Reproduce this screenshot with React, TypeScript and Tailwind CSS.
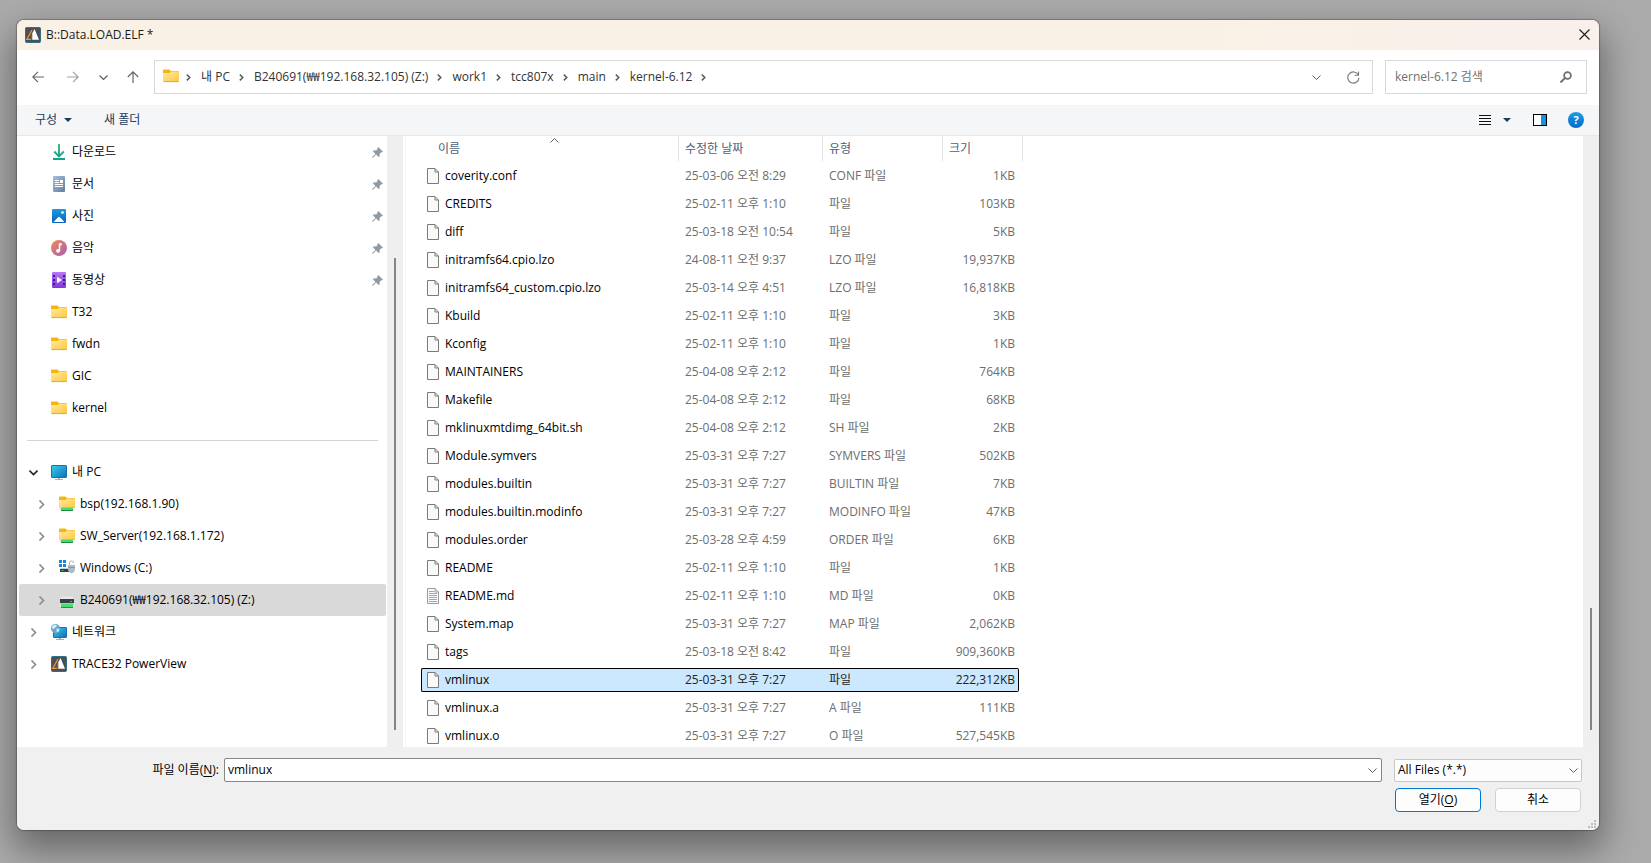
import React, { useState } from 'react';

type IconProps = { className?: string };

interface FileEntry {
  name: string;
  date: string;
  type: string;
  size: string;
  text?: boolean;
}

interface SideItem {
  label: string;
  icon: React.FC<IconProps>;
  pinned?: boolean;
  level?: number;
  expand?: 'open' | 'closed';
}

const files: FileEntry[] = [
  { name: 'coverity.conf', date: '25-03-06 오전 8:29', type: 'CONF 파일', size: '1KB' },
  { name: 'CREDITS', date: '25-02-11 오후 1:10', type: '파일', size: '103KB' },
  { name: 'diff', date: '25-03-18 오전 10:54', type: '파일', size: '5KB' },
  { name: 'initramfs64.cpio.lzo', date: '24-08-11 오전 9:37', type: 'LZO 파일', size: '19,937KB' },
  { name: 'initramfs64_custom.cpio.lzo', date: '25-03-14 오후 4:51', type: 'LZO 파일', size: '16,818KB' },
  { name: 'Kbuild', date: '25-02-11 오후 1:10', type: '파일', size: '3KB' },
  { name: 'Kconfig', date: '25-02-11 오후 1:10', type: '파일', size: '1KB' },
  { name: 'MAINTAINERS', date: '25-04-08 오후 2:12', type: '파일', size: '764KB' },
  { name: 'Makefile', date: '25-04-08 오후 2:12', type: '파일', size: '68KB' },
  { name: 'mklinuxmtdimg_64bit.sh', date: '25-04-08 오후 2:12', type: 'SH 파일', size: '2KB' },
  { name: 'Module.symvers', date: '25-03-31 오후 7:27', type: 'SYMVERS 파일', size: '502KB' },
  { name: 'modules.builtin', date: '25-03-31 오후 7:27', type: 'BUILTIN 파일', size: '7KB' },
  { name: 'modules.builtin.modinfo', date: '25-03-31 오후 7:27', type: 'MODINFO 파일', size: '47KB' },
  { name: 'modules.order', date: '25-03-28 오후 4:59', type: 'ORDER 파일', size: '6KB' },
  { name: 'README', date: '25-02-11 오후 1:10', type: '파일', size: '1KB' },
  { name: 'README.md', date: '25-02-11 오후 1:10', type: 'MD 파일', size: '0KB', text: true },
  { name: 'System.map', date: '25-03-31 오후 7:27', type: 'MAP 파일', size: '2,062KB' },
  { name: 'tags', date: '25-03-18 오전 8:42', type: '파일', size: '909,360KB' },
  { name: 'vmlinux', date: '25-03-31 오후 7:27', type: '파일', size: '222,312KB' },
  { name: 'vmlinux.a', date: '25-03-31 오후 7:27', type: 'A 파일', size: '111KB' },
  { name: 'vmlinux.o', date: '25-03-31 오후 7:27', type: 'O 파일', size: '527,545KB' },
];

const crumbs = ['내 PC', 'B240691(₩₩192.168.32.105) (Z:)', 'work1', 'tcc807x', 'main', 'kernel-6.12'];

/* ---------- icons ---------- */

const TraceIcon: React.FC<IconProps> = ({ className }) => (
  <svg className={className} width="16" height="16" viewBox="0 0 16 16">
    <rect x="0.5" y="0.5" width="15" height="15" rx="1" fill="#4d4f52" stroke="#2f7181" />
    <path d="M7 3 1.8 12.4h4" fill="none" stroke="#f09a35" strokeWidth="1.2" />
    <path d="M9.5 2 14 12.8H7.2V6.5z" fill="#fff" />
    <path d="M7.2 7.5v5" stroke="#bdbdbd" strokeWidth="0.8" />
  </svg>
);

const FolderIcon: React.FC<IconProps> = ({ className }) => (
  <svg className={className} width="16" height="16" viewBox="0 0 16 16">
    <defs>
      <linearGradient id="folder" x1="0" y1="0" x2="1" y2="1">
        <stop offset="0" stopColor="#ffe9a2" />
        <stop offset="1" stopColor="#ffc83d" />
      </linearGradient>
    </defs>
    <path d="M0 2.5A1 1 0 0 1 1 1.5h5.5L8 3h7a1 1 0 0 1 1 1v2H0z" fill="#f5b50f" />
    <path d="M0 5h6.5L8 3.6h7.2a.8.8 0 0 1 .8.8V13a1 1 0 0 1-1 1H1a1 1 0 0 1-1-1z" fill="url(#folder)" />
    <path d="M.6 13.6h14.8" stroke="#e8a21c" strokeWidth="0.9" />
  </svg>
);

const NetFolderIcon: React.FC<IconProps> = ({ className }) => (
  <svg className={className} width="16" height="16" viewBox="0 0 16 16">
    <path d="M0 1.5A1 1 0 0 1 1 .5h5.5L8 2h7a1 1 0 0 1 1 1v2H0z" fill="#f5b50f" />
    <path d="M0 4h6.5L8 2.6h7.2a.8.8 0 0 1 .8.8V12H0z" fill="url(#folder)" />
    <path d="M.5 12.5h15v1.5H.5z" fill="#e0e0e0" />
    <path d="M2 11.5h12V15H2z" fill="#3fdc68" />
    <path d="M2 14h12v1H2z" fill="#1e8b43" />
  </svg>
);

const DownloadIcon: React.FC<IconProps> = ({ className }) => (
  <svg className={className} width="16" height="16" viewBox="0 0 16 16" fill="none">
    <defs>
      <linearGradient id="down" x1="0" y1="0" x2="0" y2="16" gradientUnits="userSpaceOnUse">
        <stop offset="0" stopColor="#2fc06f" />
        <stop offset="1" stopColor="#109c9a" />
      </linearGradient>
    </defs>
    <path d="M8 0v12.2M3.2 7.5 8 12.3l4.8-4.8" stroke="url(#down)" strokeWidth="1.9" />
    <path d="M2 15h12" stroke="#14a08f" strokeWidth="1.8" />
  </svg>
);

const DocumentIcon: React.FC<IconProps> = ({ className }) => (
  <svg className={className} width="16" height="16" viewBox="0 0 16 16">
    <defs>
      <linearGradient id="doc" x1="0" y1="0" x2="1" y2="1">
        <stop offset="0" stopColor="#a9c0d8" />
        <stop offset="1" stopColor="#5f7fa0" />
      </linearGradient>
    </defs>
    <rect x="2" width="12" height="16" rx="1" fill="url(#doc)" />
    <path d="M4 4.5h4M4 6.5h4M4 8.5h8M4 10.5h8" stroke="#fff" />
    <path d="M9 4h3v3H9z" fill="#fff" />
  </svg>
);

const PictureIcon: React.FC<IconProps> = ({ className }) => (
  <svg className={className} width="16" height="16" viewBox="0 0 16 16">
    <defs>
      <linearGradient id="pic" x1="0" y1="0" x2="0" y2="1">
        <stop offset="0" stopColor="#1a9be2" />
        <stop offset="1" stopColor="#0a63bd" />
      </linearGradient>
    </defs>
    <rect x="1" y="1" width="14" height="14" rx="1" fill="url(#pic)" />
    <path d="m2.5 14 4.6-4.8a1.2 1.2 0 0 1 1.8 0L13.5 14z" fill="#fff" />
    <circle cx="11.5" cy="4.5" r="1.3" fill="#fff" />
  </svg>
);

const MusicIcon: React.FC<IconProps> = ({ className }) => (
  <svg className={className} width="16" height="16" viewBox="0 0 16 16">
    <defs>
      <linearGradient id="music" x1="0" y1="0" x2="1" y2="1">
        <stop offset="0" stopColor="#f28a52" />
        <stop offset="1" stopColor="#a45fb8" />
      </linearGradient>
    </defs>
    <circle cx="8" cy="8" r="8" fill="url(#music)" />
    <circle cx="7" cy="10.8" r="1.9" fill="#fff" />
    <path d="M7.8 11V3.2h3v2H9.2V11z" fill="#fff" />
  </svg>
);

const VideoIcon: React.FC<IconProps> = ({ className }) => (
  <svg className={className} width="16" height="16" viewBox="0 0 16 16">
    <defs>
      <linearGradient id="video" x1="0" y1="0" x2="0" y2="1">
        <stop offset="0" stopColor="#b777f5" />
        <stop offset="1" stopColor="#8237dc" />
      </linearGradient>
    </defs>
    <rect x="1" width="14" height="16" rx="1" fill="url(#video)" />
    <path d="M2 3h2v2H2zM2 7h2v2H2zM2 11h2v2H2zM12 3h2v2h-2zM12 7h2v2h-2zM12 11h2v2h-2z" fill="#3d1c7c" />
    <path d="m6 4.8 5 3.2-5 3.2z" fill="#fff" />
  </svg>
);

const PcIcon: React.FC<IconProps> = ({ className }) => (
  <svg className={className} width="16" height="16" viewBox="0 0 16 16">
    <defs>
      <linearGradient id="pc" x1="0" y1="0" x2="1" y2="1">
        <stop offset="0" stopColor="#36d3e6" />
        <stop offset="1" stopColor="#0f6cc0" />
      </linearGradient>
    </defs>
    <rect x="0.5" y="1.5" width="15" height="12" rx="0.6" fill="url(#pc)" stroke="#1d6f9c" />
    <path d="M7 14h2v1H7z" fill="#a9b3bb" />
    <path d="M4 15h8v1H4z" fill="#aab4bc" />
  </svg>
);

const NetworkIcon: React.FC<IconProps> = ({ className }) => (
  <svg className={className} width="16" height="16" viewBox="0 0 16 16">
    <rect x="2.5" y="3.5" width="13" height="10" rx="0.6" fill="url(#pc)" stroke="#1d6f9c" />
    <path d="M5 15h8v1H5zM8 14h2v1H8z" fill="#a4aeb6" />
    <circle cx="4.5" cy="4.5" r="4.5" fill="#6ea9cc" />
    <path d="M1 2.8C2.6.6 5 .4 5.8 1.4 5.6 3.4 3.4 3 3 5 1.8 5 1 4.2 1 2.8zM5.5 5c1.500-.6 2.600-.2 3 .4-.4 1.600-1.400 2.600-2.600 3z" fill="#d8edf6" />
  </svg>
);

const WindowsDriveIcon: React.FC<IconProps> = ({ className }) => (
  <svg className={className} width="16" height="16" viewBox="0 0 16 16">
    <path d="M0 0h3v3H0zM4 0h3v3H4zM0 4h3v3H0zM4 4h3v3H4z" fill="#1089de" />
    <path d="M2 8h10l1 1H1z" fill="#c9cdd1" />
    <path d="M1 9h11v3H1z" fill="#3a3d40" />
    <path d="M2.5 10.5h2" stroke="#39d353" />
    <path d="M10.5 5V3a2 2 0 0 1 4 0" stroke="#b4bcc4" strokeWidth="1.2" fill="none" />
    <path d="M9 5h7v4.5c0 2-1.500 3.200-3.500 4-2-.8-3.500-2-3.500-4z" fill="#a9bccd" />
    <path d="M9 7.5h7" stroke="#6d9fcb" />
  </svg>
);

const NetDriveIcon: React.FC<IconProps> = ({ className }) => (
  <svg className={className} width="16" height="16" viewBox="0 0 16 16">
    <path d="M3 4.5h10L15 7H1z" fill="#e6e8ea" />
    <path d="M1 7h14v4H1z" fill="#3b3f43" />
    <path d="M11.5 9.5H13" stroke="#45e06b" />
    <path d="M0 13h16v1H0z" fill="#e9e9e9" />
    <path d="M2 11.5h12V15H2z" fill="#46df6d" />
    <path d="M2 15h12v1H2z" fill="#1f9447" />
  </svg>
);

const FileIcon = ({ lined }: { lined?: boolean }) => (
  <svg width="12" height="16" viewBox="0 0 12 16" className="shrink-0">
    <path d="M.5.5H8L11.5 4v11.5H.5z" fill="#fafafa" stroke={lined ? '#9b9b9b' : '#7a7a78'} />
    <path d="M8 .5V4h3.5" fill="none" stroke={lined ? '#9b9b9b' : '#7a7a78'} />
    {lined && <path d="M2 3.5h5M2 5.5h8M2 7.5h8M2 9.5h8M2 11.5h8M2 13.5h8" stroke="#a5a5a5" />}
  </svg>
);

const PinIcon = () => (
  <svg width="11" height="11" viewBox="0 0 11 11" fill="#8f9aa3">
    <path d="M6.3 0 11 4.7l-1 .9-.8-.3-1.6 1.6.1 2.3-1 .9-2.6-2.5L.8 11l-.8-.8 3.4-3.3L.9 4.3l.9-1 2.3.1 1.6-1.6L5.4 1z" />
  </svg>
);

const Chevron = ({ dir, size = 9, stroke = '#5c5c5c', width = 1 }: { dir: 'down' | 'right' | 'up'; size?: number; stroke?: string; width?: number }) => {
  const d = { down: 'M.5 2.5l4 4 4-4', right: 'M2.5.5l4 4-4 4', up: 'M.5 6.5l4-4 4 4' }[dir];
  return (
    <svg width={size} height={size} viewBox="0 0 9 9" fill="none" stroke={stroke} strokeWidth={width}>
      <path d={d} />
    </svg>
  );
};

// heavier and shorter than Chevron, between the parts of the path
const CrumbArrow = () => (
  <svg width="5" height="7" viewBox="0 0 5 7" fill="none" stroke="#5c5c5c" strokeWidth="1.5">
    <path d="m.8.6 3 2.9-3 2.9" />
  </svg>
);

const Triangle = () => (
  <svg width="8" height="4" viewBox="0 0 8 4" fill="#1e395b">
    <path d="M0 0h8L4 4z" />
  </svg>
);

const sideItems: (SideItem | null)[] = [
  { label: '다운로드', icon: DownloadIcon, pinned: true },
  { label: '문서', icon: DocumentIcon, pinned: true },
  { label: '사진', icon: PictureIcon, pinned: true },
  { label: '음악', icon: MusicIcon, pinned: true },
  { label: '동영상', icon: VideoIcon, pinned: true },
  { label: 'T32', icon: FolderIcon },
  { label: 'fwdn', icon: FolderIcon },
  { label: 'GIC', icon: FolderIcon },
  { label: 'kernel', icon: FolderIcon },
  null, // divider
  { label: '내 PC', icon: PcIcon, expand: 'open' },
  { label: 'bsp(192.168.1.90)', icon: NetFolderIcon, level: 1, expand: 'closed' },
  { label: 'SW_Server(192.168.1.172)', icon: NetFolderIcon, level: 1, expand: 'closed' },
  { label: 'Windows (C:)', icon: WindowsDriveIcon, level: 1, expand: 'closed' },
  { label: 'B240691(₩₩192.168.32.105) (Z:)', icon: NetDriveIcon, level: 1, expand: 'closed' },
  { label: '네트워크', icon: NetworkIcon, expand: 'closed' },
  { label: 'TRACE32 PowerView', icon: TraceIcon, expand: 'closed' },
];

/* ---------- sections ---------- */

const TitleBar = () => (
  <header className="flex h-[30px] shrink-0 items-center bg-linear-to-r from-[#faf1e6] from-75% to-[#f9efec] pb-[1px] pl-2 pr-[9px]">
    <TraceIcon />
    <h1 className="ml-[5px] flex-1 text-[#1a1a1a]">B::Data.LOAD.ELF *</h1>
    <button aria-label="닫기">
      <svg width="11" height="11" viewBox="0 0 11 11" stroke="#1a1a1a" strokeWidth="1.1">
        <path d="m.5.5 10 10m0-10-10 10" />
      </svg>
    </button>
  </header>
);

const NavBar = () => (
  <div className="flex h-[55px] shrink-0 items-center gap-3 bg-white pb-[1px] pl-[15px] pr-3">
    <nav className="flex w-[110px] items-center">
      <button aria-label="뒤로">
        <svg width="12" height="12" viewBox="0 0 12 12" fill="none" stroke="#666" strokeWidth="1.2">
          <path d="M12 6H.8M6 .8.8 6 6 11.2" />
        </svg>
      </button>
      <button aria-label="앞으로" className="ml-[23px]">
        <svg width="12" height="12" viewBox="0 0 12 12" fill="none" stroke="#a0a0a0" strokeWidth="1.2">
          <path d="M0 6h11.2M6 .8 11.2 6 6 11.2" />
        </svg>
      </button>
      <button aria-label="최근 위치" className="ml-5">
        <Chevron dir="down" width={1.2} />
      </button>
      <button aria-label="위로" className="ml-[19px]">
        <svg width="12" height="12" viewBox="0 0 12 12" fill="none" stroke="#666" strokeWidth="1.2">
          <path d="M6 12V.8M.8 6 6 .8 11.2 6" />
        </svg>
      </button>
    </nav>
    <div className="flex h-[34px] flex-1 items-center border border-[#d9d9d9] pl-2 pr-3 text-[#333]">
      <FolderIcon className="mb-[2px]" />
      <ol className="flex flex-1 items-center gap-[9px] pl-[7px]">
        {crumbs.map((crumb) => (
          <li key={crumb} className="flex items-center gap-[10px]">
            <CrumbArrow />
            <button>{crumb}</button>
          </li>
        ))}
        <li className="flex">
          <CrumbArrow />
        </li>
      </ol>
      <button aria-label="이전 위치">
        <Chevron dir="down" />
      </button>
      <button aria-label="새로 고침" className="ml-[26px]">
        <svg width="13" height="13" viewBox="0 0 13 13" fill="none" stroke="#777" strokeWidth="1.1">
          <path d="M11.3 3.8A5.6 5.6 0 1 0 12 6.8" />
          <path d="M11.5.5v3.7H7.8" />
        </svg>
      </button>
    </div>
    <label className="flex h-[34px] w-[202px] items-center border border-[#d9d9d9] pl-[9px] pr-[14px]">
      <input
        type="text"
        aria-label="검색"
        placeholder="kernel-6.12 검색"
        className="min-w-0 flex-1 outline-none placeholder:text-[#707070]"
      />
      <svg width="12" height="12" viewBox="0 0 12 12" fill="none" stroke="#707070">
        <circle cx="7.5" cy="4.5" r="3.4" strokeWidth="1.8" />
        <path d="M4.9 7.1.5 11.5" strokeWidth="2" />
      </svg>
    </label>
  </div>
);

const Toolbar = () => (
  <div className="flex h-[31px] shrink-0 items-center border-b border-[#e5e7ea] bg-[#f4f6f8] pl-[18px] pr-[15px] text-[#1e395b]">
    <button className="flex items-center gap-[7px]">
      구성 <Triangle />
    </button>
    <button className="ml-8">새 폴더</button>
    <div className="ml-auto flex items-center">
      <button aria-label="보기 변경" className="flex items-center gap-3">
        <svg width="12" height="10" viewBox="0 0 12 10" stroke="#111" shapeRendering="crispEdges">
          <path d="M0 .5h12M0 3.5h12M0 6.5h12M0 9.5h12" />
        </svg>
        <Triangle />
      </button>
      <button aria-label="미리 보기 창" className="ml-[22px]">
        <svg width="14" height="12" viewBox="0 0 14 12">
          <rect x="0.5" y="0.5" width="13" height="11" fill="#fff" stroke="#000" />
          <path d="M8 1h5v10H8z" fill="#1592e0" />
        </svg>
      </button>
      <button
        aria-label="도움말"
        className="ml-[21px] flex size-4 items-center justify-center rounded-full bg-linear-to-b from-[#1c9fe5] to-[#0668c8] text-[11px] font-bold text-white"
      >
        ?
      </button>
    </div>
  </div>
);

const Sidebar = () => (
  <div className="flex w-[388px] shrink-0">
    <ul className="min-w-0 flex-1 bg-white pl-[2px] pr-[1px]">
      {sideItems.map((item) => {
        if (!item) {
          return (
            <li key="divider" className="flex h-8 items-center pl-2 pr-2">
              <hr className="flex-1 border-[#d4d4d4]" />
            </li>
          );
        }
        const Icon = item.icon;
        const selected = item.label.endsWith('(Z:)');
        return (
          <li
            key={item.label}
            className={`flex h-8 items-center rounded-[2px] pr-[3px] ${item.level ? 'pl-[18px]' : 'pl-[10px]'} ${selected ? 'bg-[#d9d9d9]' : ''}`}
          >
            <span className="flex w-[22px] items-center">
              {item.expand === 'open' && <Chevron dir="down" stroke="#222" width={1.6} />}
              {item.expand === 'closed' && <Chevron dir="right" stroke="#8a8a8a" width={1.6} />}
            </span>
            <Icon className="shrink-0" />
            <button className="ml-[5px] flex-1 text-left">{item.label}</button>
            {item.pinned && <PinIcon />}
          </li>
        );
      })}
    </ul>
    <div className="flex w-4 flex-col items-center bg-[#efefef] pb-[17px] pt-[122px]">
      <div className="w-[2px] flex-1 bg-[#858585]" />
    </div>
    <div className="w-[2px] bg-white" />
  </div>
);

const FileTable = ({ selected, onSelect }: { selected: string; onSelect: (name: string) => void }) => (
  <div className="min-w-0 flex-1 overflow-hidden border-l border-[#f7f7f7] bg-white pl-[15px]">
    <table className="w-[602px] table-fixed border-collapse text-left">
      <colgroup>
        <col className="w-[258px]" />
        <col className="w-[144px]" />
        <col className="w-[120px]" />
        <col className="w-[80px]" />
      </colgroup>
      <thead className="text-[#4c607a]">
        <tr className="h-[26px]">
          <th className="relative p-0 align-top font-normal">
            <div className="flex h-[25px] items-center border-r border-[#e5e5e5] pl-[17px]">이름</div>
            <span className="absolute inset-x-0 top-0 flex justify-center pl-2">
              <Chevron dir="up" />
            </span>
          </th>
          {['수정한 날짜', '유형', '크기'].map((head) => (
            <th key={head} className="p-0 align-top font-normal">
              <div className="flex h-[25px] items-center border-r border-[#e5e5e5] pl-[6px]">{head}</div>
            </th>
          ))}
        </tr>
      </thead>
      <tbody className="text-[#6d6d6d]">
        {files.map((file) => {
          const active = file.name === selected;
          const cell = active ? 'border-black bg-[#cce8ff] text-[#222]' : 'border-transparent';
          return (
            <tr key={file.name} className="h-7" onClick={() => onSelect(file.name)}>
              <td className="p-0">
                <div className={`flex h-6 items-center gap-[6px] rounded-l-[2px] border-y border-l pl-[5px] ${cell}`}>
                  <FileIcon lined={file.text} />
                  <span className="text-black">{file.name}</span>
                </div>
              </td>
              <td className="p-0">
                <div className={`flex h-6 items-center whitespace-nowrap border-y pl-[6px] ${cell}`}>{file.date}</div>
              </td>
              <td className="p-0">
                <div className={`flex h-6 items-center whitespace-nowrap border-y pl-[6px] ${cell}`}>{file.type}</div>
              </td>
              <td className="p-0 pr-1">
                <div className={`flex h-6 items-center justify-end rounded-r-[2px] border-y border-r pr-[3px] ${cell}`}>{file.size}</div>
              </td>
            </tr>
          );
        })}
      </tbody>
    </table>
  </div>
);

const Footer = ({ fileName, onChange }: { fileName: string; onChange: (name: string) => void }) => (
  <form className="relative shrink-0 bg-[#f0f0f0] pb-[18px] pr-[17px] pt-[11px]" onSubmit={(e) => e.preventDefault()}>
    <div className="flex items-center">
      <label htmlFor="file-name" className="w-[207px] pr-[5px] text-right">
        파일 이름(<u className="underline-offset-2">N</u>):
      </label>
      <div className="flex h-6 flex-1 items-center rounded-[2px] border border-[#868686] bg-white pl-[3px] pr-1">
        <input
          id="file-name"
          type="text"
          value={fileName}
          onChange={(e) => onChange(e.target.value)}
          className="min-w-0 flex-1 outline-none"
        />
        <button type="button" aria-label="목록 열기">
          <Chevron dir="down" />
        </button>
      </div>
      <div className="relative ml-3 w-[188px]">
        <select aria-label="파일 형식" className="block h-[23px] w-full appearance-none rounded-[2px] border border-[#c8c8c8] bg-[#fdfdfd] pl-[3px]">
          <option>All Files (*.*)</option>
        </select>
        <span className="pointer-events-none absolute inset-y-0 right-1 flex items-center">
          <Chevron dir="down" />
        </span>
      </div>
    </div>
    <div className="mt-[6px] flex justify-end gap-[14px] pr-[1px]">
      <button type="submit" className="h-6 w-[86px] rounded-[4px] border border-[#0078d4] bg-[#fdfdfd]">
        열기(<u className="underline-offset-2">O</u>)
      </button>
      <button type="button" className="h-6 w-[86px] rounded-[4px] border border-[#d0d0d0] bg-[#fdfdfd]">
        취소
      </button>
    </div>
    {/* resize grip */}
    <svg width="8" height="8" viewBox="0 0 8 8" fill="#bdbdbd" className="absolute bottom-[2px] right-[3px]">
      <path d="M6 0h2v2H6zM3 3h2v2H3zM6 3h2v2H6zM0 6h2v2H0zM3 6h2v2H3zM6 6h2v2H6z" />
    </svg>
  </form>
);

export default function App() {
  const [selected, setSelected] = useState('vmlinux');

  return (
    <div className="h-screen overflow-hidden bg-[#ababab] pb-[33px] pl-[17px] pr-[52px] pt-5 font-['Open_Sans','Noto_Sans_CJK_KR',sans-serif] text-[12px] leading-4 text-black">
      <main className="flex h-full flex-col overflow-hidden rounded-[7px] bg-[#f0f0f0] shadow-[0_0_1px_1px_rgba(0,0,0,0.25),0_16px_36px_4px_rgba(0,0,0,0.4)]">
        <TitleBar />
        <NavBar />
        <Toolbar />
        <div className="flex min-h-0 flex-1 overflow-hidden">
          <Sidebar />
          <FileTable selected={selected} onSelect={setSelected} />
          <div className="flex w-4 shrink-0 flex-col items-center bg-[#efefef] pb-[17px]">
            <div className="mt-auto h-[122px] w-[2px] bg-[#858585]" />
          </div>
        </div>
        <Footer fileName={selected} onChange={setSelected} />
      </main>
    </div>
  );
}
